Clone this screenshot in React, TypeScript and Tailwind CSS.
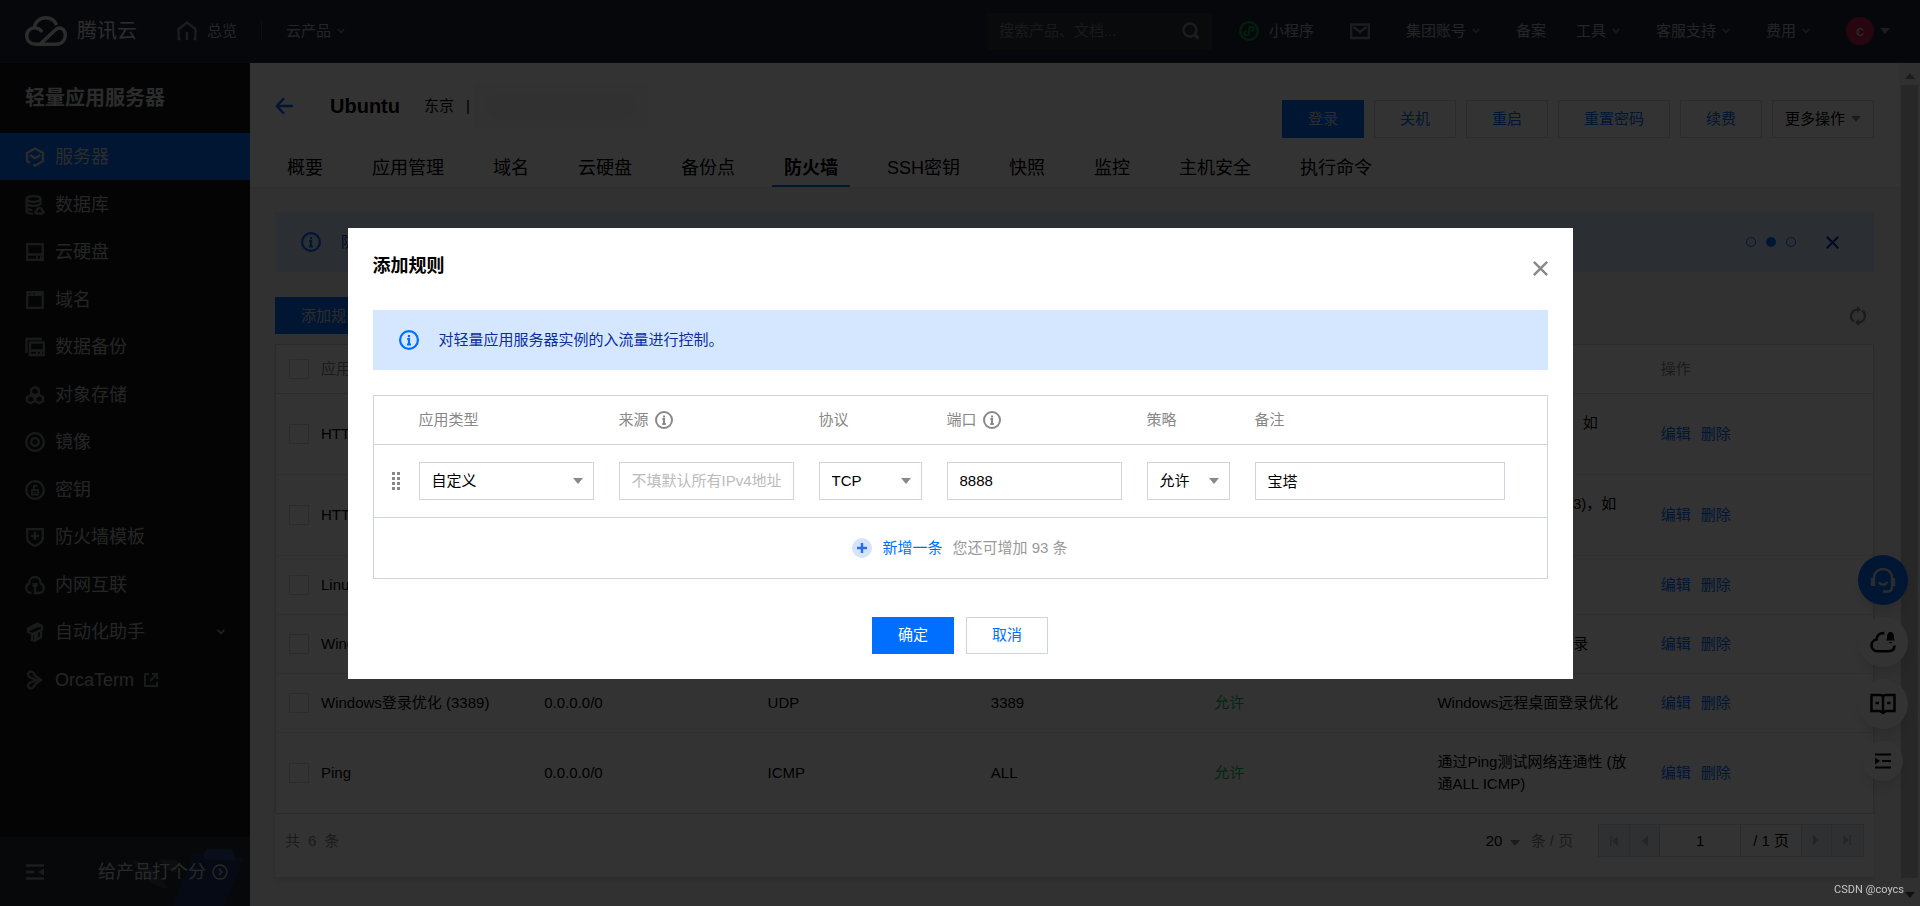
import { ReactNode, useState } from "react";

type IconProps = { className?: string };

const menu = [
  { name: "服务器", icon: ServerIcon },
  { name: "数据库", icon: DatabaseIcon },
  { name: "云硬盘", icon: DiskIcon },
  { name: "域名", icon: DomainIcon },
  { name: "数据备份", icon: BackupIcon },
  { name: "对象存储", icon: ObjectIcon },
  { name: "镜像", icon: ImageIcon },
  { name: "密钥", icon: KeyIcon },
  { name: "防火墙模板", icon: ShieldIcon },
  { name: "内网互联", icon: NetworkIcon },
  { name: "自动化助手", icon: AutoIcon, expandable: true },
  { name: "OrcaTerm", icon: OrcaIcon, external: true }
];

const tabs = [
  "概要",
  "应用管理",
  "域名",
  "云硬盘",
  "备份点",
  "防火墙",
  "SSH密钥",
  "快照",
  "监控",
  "主机安全",
  "执行命令"
];

const rules = [
  { app: "HTTP (80)", source: "0.0.0.0/0", protocol: "TCP", port: "80", note: "Web服务HTTP (80)，如 Apache、Nginx" },
  { app: "HTTPS (443)", source: "0.0.0.0/0", protocol: "TCP", port: "443", note: "Web服务HTTPS (443)，如 Apache、Nginx" },
  { app: "Linux登录 (22)", source: "0.0.0.0/0", protocol: "TCP", port: "22", note: "Linux SSH登录" },
  { app: "Windows登录 (3389)", source: "0.0.0.0/0", protocol: "TCP", port: "3389", note: "Windows远程桌面登录" },
  { app: "Windows登录优化 (3389)", source: "0.0.0.0/0", protocol: "UDP", port: "3389", note: "Windows远程桌面登录优化" },
  { app: "Ping", source: "0.0.0.0/0", protocol: "ICMP", port: "ALL", note: "通过Ping测试网络连通性 (放通ALL ICMP)" }
];

export default function App() {
  return (
    <div className="relative flex min-h-screen flex-col bg-[#f5f5f7] font-['Liberation_Sans','Noto_Sans_CJK_SC',sans-serif] text-[15px] leading-[22px] text-black">
      <Header />
      <div className="flex flex-1">
        <Sidebar />
        <Content />
        <ScrollBar />
      </div>
      <FloatingTools />
      <RuleDialog />
      <p className="fixed right-4 bottom-2 z-20 font-[Roboto,sans-serif] text-[11px] leading-4 text-[#c4c4c4]">CSDN @coycs</p>
    </div>
  );
}

function Header() {
  return (
    <header className="flex h-[63px] items-center border-b border-[#2c3242] bg-[#20263a] pr-[30px] pl-[25px] text-[#b4b7bb]">
      <a href="#" className="flex items-center gap-2.5 text-[20px] text-[#dddddd]">
        <CloudLogo />
        腾讯云
      </a>
      <a href="#" className="ml-10 flex items-center gap-2.5">
        <HomeIcon />
        总览
      </a>
      <span className="mx-6 h-5 w-px bg-[#444b5a]" />
      <NavMenu>云产品</NavMenu>

      <label className="ml-auto flex h-[37px] w-[225px] items-center bg-[#2a323c] pr-3 pl-3">
        <input
          type="search"
          aria-label="搜索"
          placeholder="搜索产品、文档..."
          className="min-w-0 flex-1 bg-transparent outline-none placeholder:text-[#7f848c]"
        />
        <SearchIcon />
      </label>

      <nav className="ml-[27px] flex items-center gap-[30px]">
        <div className="flex items-center gap-9">
          <a href="#" className="flex items-center gap-2.5">
            <MiniProgramIcon />
            小程序
          </a>
          <a href="#" aria-label="站内信">
            <MailIcon />
          </a>
          <NavMenu>集团账号</NavMenu>
          <a href="#">备案</a>
        </div>
        <div className="flex items-center gap-9">
          <NavMenu>工具</NavMenu>
          <NavMenu>客服支持</NavMenu>
          <NavMenu>费用</NavMenu>
          <button type="button" className="flex items-center gap-1.5">
            <span className="grid size-7 place-items-center rounded-full bg-[#c81e50] text-[#dddddd]">c</span>
            <Caret className="text-[#8a8f99]" />
          </button>
        </div>
      </nav>
    </header>
  );
}

function NavMenu({ children }: { children: ReactNode }) {
  return (
    <button type="button" className="flex items-center gap-1.5">
      {children}
      <Chevron className="text-[#7b808a]" />
    </button>
  );
}

function Sidebar() {
  return (
    <aside className="flex w-[250px] shrink-0 flex-col bg-[#15181d] text-[#b4b7bb]">
      <h2 className="px-[25px] py-[23px] text-[20px] leading-6 font-bold text-[#d8d9da]">轻量应用服务器</h2>
      <ul className="flex-1 text-[18px]">
        {menu.map(({ name, icon: Icon, expandable, external }, i) => (
          <li key={name} className="even:mt-px">
            <a
              href="#"
              className={
                i === 0
                  ? "flex h-[47px] items-center gap-2.5 bg-[#006eff] px-[25px] text-[#d8d9da]"
                  : "flex h-[47px] items-center gap-2.5 px-[25px]"
              }
            >
              <Icon className={i === 0 ? "text-[#d8d9da]" : "text-[#7e8084]"} />
              {name}
              {expandable ? <Chevron className="ml-auto text-[#b4b7bb]" /> : null}
              {external ? <ExternalIcon /> : null}
            </a>
          </li>
        ))}
      </ul>
      <div className="relative flex h-[69px] items-center justify-between overflow-hidden bg-[#252a35] pr-[22px] pl-[25px]">
        <RatingArt />
        <button type="button" aria-label="收起" className="relative">
          <CollapseIcon />
        </button>
        <a href="#" className="relative flex items-center gap-1.5 text-[18px] text-[#cccccc]">
          给产品打个分
          <CircleArrowIcon />
        </a>
      </div>
    </aside>
  );
}

function Content() {
  return (
    <main className="min-w-0 flex-1">
      <div className="border-b border-[#eaeaea] bg-white px-[25px] pt-5">
        <div className="flex items-start justify-between">
          <div className="flex h-[46px] items-center">
            <a href="#" aria-label="返回">
              <BackIcon />
            </a>
            <h1 className="ml-[37px] text-[20px] font-bold">Ubuntu</h1>
            <span className="ml-6">东京</span>
            <span className="ml-3">|</span>
            <span className="ml-1 h-[46px] w-[174px] bg-[#fbfbfb] p-3">
              <span className="block h-full w-full bg-[#f0f0f0] blur-sm" />
            </span>
          </div>
          <div className="mt-[17px] flex gap-2.5">
            <button type="button" className="h-[38px] bg-[#006eff] px-[26px] text-[#dddddd]">
              登录
            </button>
            <OutlineButton>关机</OutlineButton>
            <OutlineButton>重启</OutlineButton>
            <OutlineButton>重置密码</OutlineButton>
            <OutlineButton>续费</OutlineButton>
            <button type="button" className="flex h-[38px] items-center gap-1.5 border border-[#cfd5de] px-3">
              更多操作
              <Caret className="text-[#888888]" />
            </button>
          </div>
        </div>
        <nav className="mt-[13px] flex gap-[25px] text-[18px]">
          {tabs.map((tab) => (
            <a
              key={tab}
              href="#"
              className={
                tab === "防火墙"
                  ? "border-b-2 border-[#006eff] px-3 leading-[34px] font-bold"
                  : "border-b-2 border-transparent px-3 leading-[34px]"
              }
            >
              {tab}
            </a>
          ))}
        </nav>
      </div>

      <div className="px-[25px] pt-6 pb-7">
        <div className="flex h-[60px] items-center bg-[#d5e7ff] pr-[35px] pl-[26px] text-[#0b2e9c]">
          <InfoIcon className="size-5 text-[#006eff]" />
          <p className="ml-5">防火墙规则对实例的入流量进行控制。</p>
          <div className="ml-auto flex items-center gap-2.5">
            <span className="size-2.5 rounded-full border border-[#006eff]" />
            <span className="size-2.5 rounded-full bg-[#006eff]" />
            <span className="size-2.5 rounded-full border border-[#006eff]" />
          </div>
          <button type="button" aria-label="关闭提示" className="ml-[30px]">
            <CloseIcon className="size-[13px]" />
          </button>
        </div>

        <div className="mt-[25px] flex items-center justify-between pr-[7px]">
          <button type="button" className="h-[37px] bg-[#006eff] px-[26px] text-[#dddddd]">
            添加规则
          </button>
          <button type="button" aria-label="刷新">
            <RefreshIcon />
          </button>
        </div>

        <div className="mt-2.5 bg-white shadow-md">
          <RuleTable />
          <Pager />
        </div>
      </div>
    </main>
  );
}

function OutlineButton({ children }: { children: ReactNode }) {
  return (
    <button type="button" className="h-[38px] border border-[#cfd5de] px-[25px] text-[#006eff]">
      {children}
    </button>
  );
}

function RuleTable() {
  return (
    <table className="w-full table-fixed border-separate border-spacing-0 border border-b-0 border-[#cfd5de] text-left">
      <thead className="text-[#888888]">
        <tr>
          <th className="w-[34px] border-b border-[#cfd5de] py-[14px] pl-[13px]">
            <CheckBox label="全选" />
          </th>
          {["应用类型", "来源", "协议", "端口", "策略", "备注", "操作"].map((title) => (
            <th key={title} className="border-b border-[#cfd5de] px-[11px] font-normal">
              {title}
            </th>
          ))}
        </tr>
      </thead>
      <tbody className="[&_td]:border-b [&_td]:border-[#e5e8ed] [&_td]:py-[18px] [&_tr:last-child_td]:border-[#cfd5de]">
        {rules.map((rule) => (
          <tr key={rule.app}>
            <td className="pl-[13px]">
              <CheckBox label={rule.app} />
            </td>
            <td className="px-[11px]">{rule.app}</td>
            <td className="px-[11px]">{rule.source}</td>
            <td className="px-[11px]">{rule.protocol}</td>
            <td className="px-[11px]">{rule.port}</td>
            <td className="px-[11px] text-[#0abf5b]">允许</td>
            <td className="px-[11px]">{rule.note}</td>
            <td className="px-[11px] text-[#006eff]">
              <div className="flex gap-2.5">
                <a href="#">编辑</a>
                <a href="#">删除</a>
              </div>
            </td>
          </tr>
        ))}
      </tbody>
    </table>
  );
}

function CheckBox({ label }: { label: string }) {
  return (
    <input
      type="checkbox"
      aria-label={label}
      className="block size-5 appearance-none border border-[#cfd5de] bg-white checked:bg-[#006eff]"
    />
  );
}

function Pager() {
  return (
    <div className="flex items-center justify-between px-2.5 pt-2.5 pb-5 text-[#888888]">
      <p className="flex gap-2">
        <span>共</span>
        <span>6</span>
        <span>条</span>
      </p>
      <div className="flex items-center">
        <label className="flex items-center">
          <span className="relative flex items-center">
            <select className="w-[34px] appearance-none bg-transparent text-black outline-none" defaultValue="20">
              <option>20</option>
              <option>50</option>
            </select>
            <Caret className="pointer-events-none absolute top-2.5 right-0 text-[#888888]" />
          </span>
          <span className="ml-[11px]">条 / 页</span>
        </label>
        <div className="ml-[25px] flex h-[33px] border border-[#cfd5de] text-[#b4b8be]">
          <button type="button" aria-label="首页" className="grid w-[30px] place-items-center bg-[#e9edf3]">
            <PageArrow first />
          </button>
          <button type="button" aria-label="上一页" className="grid w-[31px] place-items-center border-x border-[#cfd5de] bg-[#e9edf3]">
            <PageArrow />
          </button>
          <input aria-label="页码" defaultValue="1" className="w-20 bg-white text-center text-black outline-none" />
          <span className="border-x border-[#cfd5de] px-3 leading-[31px] text-black">/ 1 页</span>
          <button type="button" aria-label="下一页" className="grid w-[30px] rotate-180 place-items-center border-l border-[#cfd5de] bg-[#e9edf3]">
            <PageArrow />
          </button>
          <button type="button" aria-label="末页" className="grid w-[31px] rotate-180 place-items-center bg-[#e9edf3]">
            <PageArrow first />
          </button>
        </div>
      </div>
    </div>
  );
}

function ScrollBar() {
  return (
    <div className="flex w-[21px] shrink-0 flex-col items-center bg-[#f1f1f1] pt-2.5 pb-2 text-[#505050]">
      <Caret className="rotate-180 text-[#8a8a8a]" />
      <div className="mt-1.5 mb-3.5 w-[17px] flex-1 bg-[#c1c1c1]" />
      <Caret />
    </div>
  );
}

function FloatingTools() {
  return (
    <div className="absolute top-[555px] right-3 flex flex-col items-center gap-3">
      <button type="button" aria-label="在线客服" className="grid size-[50px] place-items-center rounded-full bg-[#006eff] text-[#dddddd] shadow-lg">
        <HeadsetIcon />
      </button>
      <button type="button" aria-label="消息" className="grid size-[50px] place-items-center rounded-full bg-white shadow-lg">
        <CloudBellIcon />
      </button>
      <button type="button" aria-label="文档" className="grid size-[50px] place-items-center rounded-full bg-white shadow-lg">
        <BookIcon />
      </button>
      <button type="button" aria-label="展开" className="grid size-10 place-items-center rounded-full bg-white shadow-lg">
        <ExpandIcon />
      </button>
    </div>
  );
}

function RuleDialog() {
  const [source, setSource] = useState("");
  const [port, setPort] = useState("8888");
  const [note, setNote] = useState("宝塔");
  const field = "h-[38px] w-full border border-[#cfd5de] bg-white px-3 outline-none placeholder:text-[#bbbbbb]";

  return (
    <div className="fixed inset-0 z-10 grid place-items-center bg-black/80">
      <section role="dialog" aria-labelledby="dialog-title" className="w-full max-w-[1225px] bg-white p-[25px]">
        <div className="flex items-center justify-between">
          <h3 id="dialog-title" className="text-[18px] leading-[26px] font-bold">
            添加规则
          </h3>
          <button type="button" aria-label="关闭" className="pt-1.5 text-[#888888]">
            <CloseIcon className="size-[15px]" />
          </button>
        </div>

        <div className="mt-[31px] flex h-[60px] items-center gap-5 bg-[#d5e7ff] px-[26px] text-[#0b2e9c]">
          <InfoIcon className="size-5 text-[#006eff]" />
          <p>对轻量应用服务器实例的入流量进行控制。</p>
        </div>

        <div className="mt-[25px] border border-[#cfd5de]">
          <table className="w-full table-fixed border-separate border-spacing-0 text-left [&_td]:border-b [&_td]:border-[#cfd5de] [&_th]:border-b [&_th]:border-[#cfd5de]">
            <thead className="text-[#888888]">
              <tr className="h-[49px] [&_th]:font-normal">
                <th className="w-[45px]" />
                <th className="w-[200px]">应用类型</th>
                <th className="w-[200px]">
                  <span className="flex items-center gap-1.5">
                    来源
                    <InfoIcon className="size-[18px]" />
                  </span>
                </th>
                <th className="w-32">协议</th>
                <th className="w-[200px]">
                  <span className="flex items-center gap-1.5">
                    端口
                    <InfoIcon className="size-[18px]" />
                  </span>
                </th>
                <th className="w-[108px]">策略</th>
                <th>备注</th>
              </tr>
            </thead>
            <tbody>
              <tr className="h-[73px]">
                <td className="pl-[18px]">
                  <DragIcon />
                </td>
                <td className="pr-[25px]">
                  <SelectField label="应用类型" options={["自定义", "HTTP (80)", "HTTPS (443)"]} />
                </td>
                <td className="pr-[25px]">
                  <input
                    aria-label="来源"
                    value={source}
                    onChange={(event) => setSource(event.target.value)}
                    placeholder="不填默认所有IPv4地址"
                    className={field}
                  />
                </td>
                <td className="pr-[25px]">
                  <SelectField label="协议" options={["TCP", "UDP", "ICMP"]} />
                </td>
                <td className="pr-[25px]">
                  <input aria-label="端口" value={port} onChange={(event) => setPort(event.target.value)} className={field} />
                </td>
                <td className="pr-[25px]">
                  <SelectField label="策略" options={["允许", "拒绝"]} />
                </td>
                <td className="pr-[42px]">
                  <input aria-label="备注" value={note} onChange={(event) => setNote(event.target.value)} className={field} />
                </td>
              </tr>
            </tbody>
          </table>
          <div className="flex h-[60px] items-center justify-center gap-2.5">
            <button type="button" className="flex items-center gap-2.5 text-[#006eff]">
              <PlusIcon />
              新增一条
            </button>
            <span className="text-[#999999]">您还可增加 93 条</span>
          </div>
        </div>

        <div className="mt-[38px] flex justify-center gap-3">
          <button type="button" className="h-[37px] bg-[#006eff] px-[26px] text-white">
            确定
          </button>
          <button type="button" className="h-[37px] border border-[#cfd5de] px-[25px] text-[#006eff]">
            取消
          </button>
        </div>
      </section>
    </div>
  );
}

function SelectField({ label, options }: { label: string; options: string[] }) {
  return (
    <div className="relative">
      <select aria-label={label} className="h-[38px] w-full appearance-none border border-[#cfd5de] bg-white px-3 outline-none">
        {options.map((option) => (
          <option key={option}>{option}</option>
        ))}
      </select>
      <Caret className="pointer-events-none absolute top-4 right-[11px] text-[#888888]" />
    </div>
  );
}

/* icons */

function Svg({ className = "", children }: IconProps & { children: ReactNode }) {
  return (
    <svg viewBox="0 0 20 20" fill="none" stroke="currentColor" strokeWidth="2.3" className={`size-5 shrink-0 ${className}`}>
      {children}
    </svg>
  );
}

function Caret({ className = "" }: IconProps) {
  return (
    <svg viewBox="0 0 10 6" fill="currentColor" className={`h-1.5 w-2.5 shrink-0 ${className}`}>
      <path d="M0 0h10L5 6z" />
    </svg>
  );
}

function Chevron({ className = "" }: IconProps) {
  return (
    <svg viewBox="0 0 8 6" fill="none" stroke="currentColor" strokeWidth="1.5" className={`h-1.5 w-2 shrink-0 ${className}`}>
      <path d="M.8 1 4 4.4 7.2 1" />
    </svg>
  );
}

function CloudLogo() {
  return (
    <svg viewBox="0 0 42 30" fill="none" stroke="currentColor" strokeWidth="3.4" className="h-[30px] w-[42px]">
      <path d="M15 28.2 30.5 13.8c4.5-4 9.8-.6 9.8 5.3 0 5.2-3.6 9.1-8.8 9.1h-21c-5.2 0-8.8-3.8-8.8-8.3 0-5.4 4.6-8.8 9.4-7.9 2.3.4 4.2 1.7 6.3 3.7" />
      <path d="M9.2 12C10 5.6 15 1.7 20.7 1.7c4.8 0 9 2.8 10.8 7.3" />
    </svg>
  );
}

function HomeIcon() {
  return (
    <Svg className="text-[#8a8f99]">
      <path d="M3.5 18H1.6V8L10 1.500l8.400 6.500V18h-1.900M10 11v8" />
    </Svg>
  );
}

function SearchIcon() {
  return (
    <svg viewBox="0 0 18 18" fill="none" stroke="currentColor" strokeWidth="2.4" className="size-[18px] text-[#8a8f99]">
      <circle cx="8" cy="8" r="6.5" />
      <path d="m12.5 12.500 4 4" strokeWidth="3.2" />
    </svg>
  );
}

function MiniProgramIcon() {
  return (
    <Svg className="text-[#00a045]">
      <circle cx="10" cy="10" r="8.8" />
      <path d="M8 10.200c-2 0-2.800 1-2.800 2.200 0 1.100 1 2 2.200 2 1.500 0 2.600-1 2.600-2.400V8c0-1.400 1.100-2.400 2.600-2.400 1.200 0 2.200.9 2.200 2 0 1.200-.8 2.200-2.800 2.200" strokeWidth="1.8" />
    </Svg>
  );
}

function MailIcon() {
  return (
    <Svg className="text-[#8a8f99]">
      <path d="M1.200 3.500h17.600v13.500H1.200zM3.500 6l6.500 5 6.500-5" />
    </Svg>
  );
}

function ServerIcon({ className }: IconProps) {
  return (
    <Svg className={className}>
      <path d="M5 16 2 14V6l8-4.500L18 6v8.200l-8 4.500-1.500-1" />
      <path d="m5 8 5 3.200L15.500 8" />
    </Svg>
  );
}

function DatabaseIcon({ className }: IconProps) {
  return (
    <Svg className={className}>
      <ellipse cx="8.500" cy="4" rx="7" ry="2.800" />
      <path d="M1.500 4v4c0 1.600 3 2.800 7 2.800s7-1.200 7-2.800V4M1.500 9.500v3c0 1.200 2.500 2.300 6 2.600M1.500 14v2c0 1.400 2.500 2.500 6.500 2.800" />
      <path d="M11.500 18.500c-1.800-.5-1.600-3 .4-3.200.3-3 5-3 5.200 0 2 .2 2.200 2.700.4 3.200z" />
    </Svg>
  );
}

function DiskIcon({ className }: IconProps) {
  return (
    <Svg className={className}>
      <path d="M2.200 2.200h15.600v15.600H2.200zM2 12.500h16M11 15.500h2M15 15.500h1.500" />
    </Svg>
  );
}

function DomainIcon({ className }: IconProps) {
  return (
    <Svg className={className}>
      <path d="M2.200 2.200h15.600v15.600H2.200z" />
      <path d="M2 2h2v2.500h1.500V2H8v2.500h1.500V2H18v4H2z" fill="currentColor" stroke="none" />
    </Svg>
  );
}

function BackupIcon({ className }: IconProps) {
  return (
    <Svg className={className}>
      <path d="M1.500 16V2H17M5 5.500h13.800V18H5zM5 13.500h14M11 15.800h2M15 15.800h2" />
    </Svg>
  );
}

function ObjectIcon({ className }: IconProps) {
  return (
    <Svg className={className}>
      <path d="m10 2 3.800 2.200v4L10 10.400 6.200 8.200v-4zM5.700 10l3.700 2.200v4l-3.700 2.100L2 16.200v-4zM14.300 10l3.700 2.200v4l-3.700 2.100-3.700-2.100v-4z" />
    </Svg>
  );
}

function ImageIcon({ className }: IconProps) {
  return (
    <Svg className={className}>
      <circle cx="10" cy="10" r="8.8" />
      <circle cx="10" cy="10" r="3.800" />
    </Svg>
  );
}

function KeyIcon({ className }: IconProps) {
  return (
    <Svg className={className}>
      <circle cx="10" cy="10" r="8.8" />
      <path d="M7 10h6v4.500H7zM8.800 10V6h3.400M10 12v1" strokeWidth="1.800" />
    </Svg>
  );
}

function ShieldIcon({ className }: IconProps) {
  return (
    <Svg className={className}>
      <path d="M2.200 2.200h15.600V11c0 3.500-2.800 6-7.800 8-5-2-7.800-4.500-7.800-8zM10 5v8M6 9h8" />
    </Svg>
  );
}

function NetworkIcon({ className }: IconProps) {
  return (
    <Svg className={className}>
      <path d="M6.500 18C3.500 18 1.200 16 1.200 13c0-2.300 1.200-3.800 3-4.400C4.200 4.500 6.800 2 10 2s5.800 2.500 5.800 6.600c1.800.6 3 2.100 3 4.400 0 3-2.300 5-5.300 5H10v-8" />
      <path d="M7.500 8h5v4h-5z" fill="currentColor" stroke="none" />
    </Svg>
  );
}

function AutoIcon({ className }: IconProps) {
  return (
    <Svg className={className}>
      <path d="M3 6.500 12.500 1.500 17 4v3.500L7.500 12 3 10zM4 8l12-5.500M7 12v6l3 1V11M12 10.500v7l4-2.500V8" />
    </Svg>
  );
}

function OrcaIcon({ className }: IconProps) {
  return (
    <Svg className={className}>
      <path d="M11.500 10 4.500 7C1.500 5 3.500.500 7 1.800c2 .9 2.500 3 3.500 4.200L16 10l-5.500 4c-1 1.200-1.500 3.300-3.500 4.200-3.500 1.300-5.500-3.200-2.500-5.200z" />
    </Svg>
  );
}

function ExternalIcon() {
  return (
    <svg viewBox="0 0 14 14" fill="none" stroke="currentColor" strokeWidth="2" className="size-3.5 text-[#7e8084]">
      <path d="M5 1H1v12h12V9M8 1h5v5M13 1 6 8" />
    </svg>
  );
}

function RatingArt() {
  return (
    <svg viewBox="0 0 130 60" className="absolute right-0 bottom-0 h-[60px] w-[130px]">
      <path d="M53 60 74 7l50 5-20 48z" fill="#1f3566" />
      <path d="m83 8 5-6 25 2 3 11-32-2z" fill="#294581" />
      <path d="M12 14c8 1 20 8 28 17l8 12c-10-1-20-8-27-16z" fill="#38404f" />
      <path d="M40 13l18 2-2 12-14-5z" fill="#38404f" />
    </svg>
  );
}

function CollapseIcon() {
  return (
    <Svg className="text-[#8e9094]">
      <path d="M1 3.500h18M1 10h8M1 16.500h18" />
      <path d="M19 6.500v7L13 10z" fill="currentColor" stroke="none" />
    </Svg>
  );
}

function CircleArrowIcon() {
  return (
    <svg viewBox="0 0 16 16" fill="none" stroke="currentColor" strokeWidth="1.3" className="size-4">
      <circle cx="8" cy="8" r="7" />
      <path d="m7 5 3 3-3 3" />
    </svg>
  );
}

function BackIcon() {
  return (
    <svg viewBox="0 0 18 18" fill="none" stroke="currentColor" strokeWidth="2.4" className="size-[18px] text-[#006eff]">
      <path d="M9 1.200 1.800 9 9 16.800M2 9h16" />
    </svg>
  );
}

function InfoIcon({ className = "" }: IconProps) {
  return (
    <svg viewBox="0 0 20 20" fill="none" stroke="currentColor" strokeWidth="2.2" className={`shrink-0 ${className}`}>
      <circle cx="10" cy="10" r="8.9" />
      <path d="M10 5v2.200M8.200 9H10v5.500M8 14.500h4" />
    </svg>
  );
}

function CloseIcon({ className = "" }: IconProps) {
  return (
    <svg viewBox="0 0 14 14" fill="none" stroke="currentColor" strokeWidth="2.2" className={className}>
      <path d="m.8.8 12.400 12.400M13.200.8.8 13.200" />
    </svg>
  );
}

function RefreshIcon() {
  return (
    <svg viewBox="0 0 18 20" fill="none" stroke="currentColor" strokeWidth="2.4" className="h-5 w-[18px] text-[#888888]">
      <path d="M5 15.500A6.500 6.500 0 0 1 8.500 3.600M13 4.500a6.500 6.500 0 0 1-3.500 11.900" />
      <path d="M8 0v7l4-3.500zM10 13v7l-4-3.500z" fill="currentColor" stroke="none" />
    </svg>
  );
}

function PageArrow({ first = false }: { first?: boolean }) {
  return (
    <svg viewBox="0 0 10 10" fill="currentColor" className="size-2.5">
      <path d={first ? "M1 0h1.500v10H1zM9 0v10L3 5z" : "M8 0v10L2 5z"} />
    </svg>
  );
}

function DragIcon() {
  return (
    <svg viewBox="0 0 8 18" fill="#888888" className="h-[18px] w-2">
      {[0, 5, 10, 15].map((y) => (
        <g key={y}>
          <rect y={y} width="3" height="3" />
          <rect x="5" y={y} width="3" height="3" />
        </g>
      ))}
    </svg>
  );
}

function PlusIcon() {
  return (
    <svg viewBox="0 0 20 20" className="size-5">
      <circle cx="10" cy="10" r="10" fill="#d5e3fb" />
      <path d="M10 5v10M5 10h10" stroke="#266fe8" strokeWidth="2.4" />
    </svg>
  );
}

function HeadsetIcon() {
  return (
    <svg viewBox="0 0 26 26" fill="none" stroke="currentColor" strokeWidth="2.4" className="size-[26px]">
      <path d="M4 19v-8.500C4 5.500 8 2 13 2s9 3.500 9 8.500V20c0 3-1.500 4.500-4 4.500h-5" />
      <path d="M2 11v8M24 11v8M9 15c1 3.500 7 3.500 8 0" />
    </svg>
  );
}

function CloudBellIcon() {
  return (
    <svg viewBox="0 0 26 22" fill="none" stroke="currentColor" strokeWidth="2.6" className="h-[22px] w-[26px]">
      <path d="M14.500 2.200C10 1.500 6.800 4.500 6.500 8.500 3.500 9 1.500 11.500 1.500 14.200c0 3.600 2.500 6 6 6h11c3.500 0 6-2 6-5.700" />
      <path d="M16 9.500c1-1 1-2 1-4C17 3 18.500 1 20.500 1S24 3 24 5.500c0 2 0 3 1 4zM18.500 11h4l-2 1.800z" fill="currentColor" stroke="none" />
    </svg>
  );
}

function BookIcon() {
  return (
    <svg viewBox="0 0 26 22" fill="none" stroke="currentColor" strokeWidth="2.4" className="h-[22px] w-[26px]">
      <path d="M1.500 2H10c2 0 3 1 3 2.500C13 3 14 2 16 2h8.500v16H16l-3 2-3-2H1.500zM13 4.500V19M5.500 10H9M17 10h3.500" />
    </svg>
  );
}

function ExpandIcon() {
  return (
    <svg viewBox="0 0 18 16" fill="none" stroke="currentColor" strokeWidth="2.2" className="h-4 w-[18px]">
      <path d="M1 1.500h16M8 8h9M1 14.500h16" />
      <path d="M1 4.500v7L6 8z" fill="currentColor" stroke="none" />
    </svg>
  );
}
